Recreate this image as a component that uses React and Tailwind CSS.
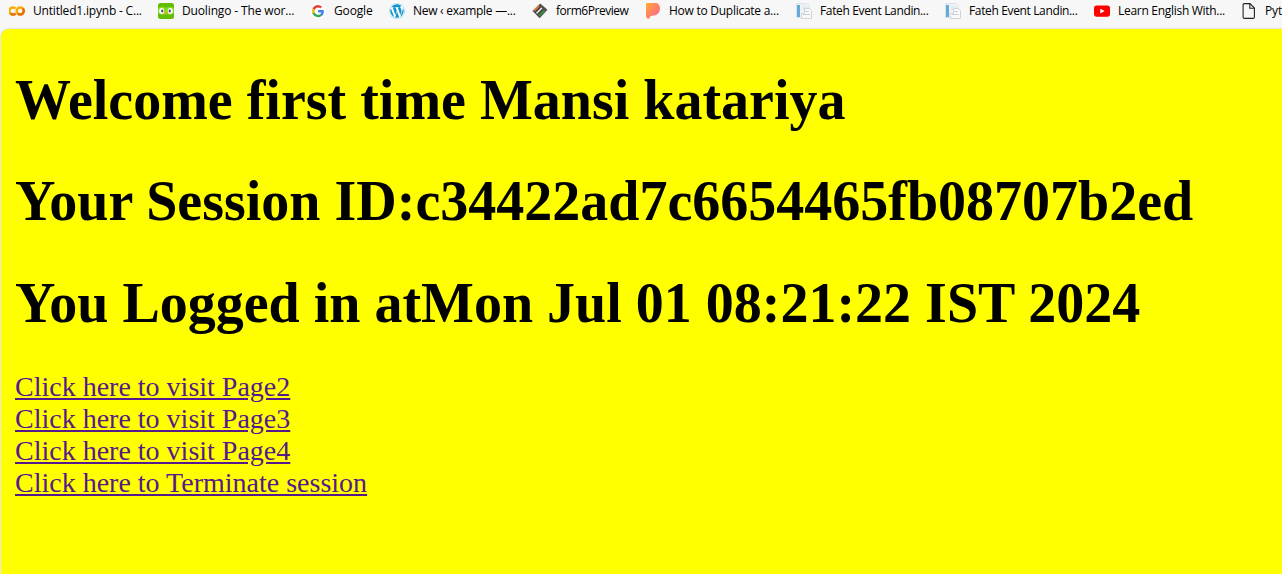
import { FaWordpress } from "react-icons/fa";

function ColabIcon() {
  return (
    <svg viewBox="0 0 16 16" className="size-4" fill="none" strokeWidth="2.5">
      <path d="M6.6 5.5A3.6 3.6 0 1 0 6.6 10.5" stroke="#f9ab00" />
      <path d="M1.6 10.5A3.6 3.6 0 0 0 6.6 10.5" stroke="#e8710a" />
      <circle cx="11.2" cy="8" r="3.5" stroke="#f9ab00" />
      <path d="M8.7 10.5A3.5 3.5 0 0 0 13.7 5.5" stroke="#e8710a" />
    </svg>
  );
}

function DuolingoIcon() {
  return (
    <svg viewBox="0 0 16 16" className="size-4">
      <rect width="16" height="16" rx="2.5" fill="#61bd05" />
      <path d="M0 5Q4 2.5 8 5Q12 2.5 16 5V10Q12 13 8 11Q4 13 0 10Z" fill="#83dc20" />
      <rect x="1.2" y="5" width="5" height="6" rx="2.5" fill="#fff" />
      <rect x="9.8" y="5" width="5" height="6" rx="2.5" fill="#fff" />
      <rect x="3.3" y="6.5" width="2" height="3" rx="1" fill="#4b4b4b" />
      <rect x="10.7" y="6.5" width="2" height="3" rx="1" fill="#4b4b4b" />
      <path d="M6.2 9.2H9.8L8 12Z" fill="#ff9f00" />
    </svg>
  );
}

function GoogleIcon() {
  return (
    <svg viewBox="0 0 16 16" className="size-4">
      <circle cx="8" cy="8" r="8" fill="#fff" />
      <g transform="translate(1.9 2) scale(.51)">
        <path fill="#4285f4" d="M23.5 12.3c0-.9-.1-1.6-.2-2.3H12v4.6h6.5c-.3 1.5-1.1 2.8-2.4 3.6v3h3.9c2.3-2.1 3.5-5.2 3.5-8.9z" />
        <path fill="#34a853" d="M12 24c3.2 0 6-1.1 8-2.9l-3.9-3c-1.1.7-2.5 1.2-4.1 1.2-3.1 0-5.8-2.1-6.7-5H1.3v3.1C3.3 21.3 7.3 24 12 24z" />
        <path fill="#fbbc05" d="M5.3 14.3a7.2 7.2 0 0 1 0-4.6V6.6h-4a12 12 0 0 0 0 10.8z" />
        <path fill="#ea4335" d="M12 4.8c1.8 0 3.3.6 4.6 1.8L20 3.2A11.5 11.5 0 0 0 12 0C7.3 0 3.3 2.7 1.3 6.6l4 3.1c.9-2.9 3.6-4.9 6.7-4.9z" />
      </g>
    </svg>
  );
}

function WordPressIcon() {
  return <FaWordpress className="size-4 rounded-full bg-white text-[#1095cb]" />;
}

function FormIcon() {
  return (
    <svg viewBox="0 0 16 16" className="size-4">
      <path d="M0.5 8L8.3 .5L15.5 6.8L7.7 15.2Z" fill="#55504d" />
      <path d="M2 7.6L6.8 3" stroke="#e07a3c" strokeWidth="1.9" />
      <path d="M4.6 10.2L9.8 5" stroke="#f0f0f0" strokeWidth="1.5" />
      <path d="M7.4 12.6L12.4 7.6" stroke="#2b9b3e" strokeWidth="1.9" />
      <path d="M3.2 9.2L8.4 4M6 11.6L11.2 6.4" stroke="#454040" strokeWidth=".9" />
    </svg>
  );
}

function PIcon() {
  return (
    <svg viewBox="0 0 16 16" className="size-4">
      <defs>
        <linearGradient id="peach" x1="0" y1="0" x2="1" y2="1">
          <stop stopColor="#ffae35" />
          <stop offset=".5" stopColor="#ff8066" />
          <stop offset="1" stopColor="#ff6695" />
        </linearGradient>
      </defs>
      <path d="M1 0H11.5Q15 1 15 5.5Q15 11.5 9 12.5L5.5 13Q5 15.8 3.5 15.8Q1 15.5 1 12Z" fill="url(#peach)" />
    </svg>
  );
}

function DocumentsIcon() {
  return (
    <svg viewBox="0 0 16 16" className="size-4">
      <path d="M.5 .5H11L13 2.5V14.5H.5Z" fill="#eef2f5" stroke="#dce2e8" />
      <path d="M1 2H4V14H1Z" fill="#65aad5" />
      <path d="M6 4H11M6 6H9" stroke="#d8e2ea" />
      <path d="M8.5 5.5H13.5L15.5 7.5V15.5H5.5V10.5H8.5Z" fill="#f8f9fa" stroke="#d0d4d8" />
      <path d="M9 8.5H13M7 11.5H14" stroke="#cbd0d4" />
    </svg>
  );
}

function YouTubeIcon() {
  return (
    <svg viewBox="0 0 16 16" className="size-4">
      <rect y="2.4" width="16" height="11.4" rx="2.7" fill="#f00" />
      <path d="M6.3 5.8L10.6 8.1L6.3 10.4Z" fill="#fff" />
    </svg>
  );
}

function FileIcon() {
  return (
    <svg viewBox="0 0 16 16" className="size-4" fill="none" stroke="#222" strokeWidth="1.1">
      <path d="M3.5 .6H9L13.4 5V14Q13.4 15.4 12 15.4H3.5Q2.1 15.4 2.1 14V2Q2.1 .6 3.5 .6Z" />
      <path d="M8.8 .8V5.2H13.2" />
    </svg>
  );
}

const bookmarks = [
  { label: "Untitled1.ipynb - C...", Icon: ColabIcon, cell: "w-[149px]", tracking: "tracking-[-0.19px]" },
  { label: "Duolingo - The wor...", Icon: DuolingoIcon, cell: "w-[152px]", tracking: "tracking-[-0.14px]" },
  { label: "Google", Icon: GoogleIcon, cell: "w-[79px]", tracking: "tracking-[-0.15px]" },
  { label: "New ‹ example —...", Icon: WordPressIcon, cell: "w-[143px]", tracking: "tracking-[-0.27px]" },
  { label: "form6Preview", Icon: FormIcon, cell: "w-[113px]", tracking: "tracking-[-0.48px]" },
  { label: "How to Duplicate a...", Icon: PIcon, cell: "w-[151px]", tracking: "tracking-[-0.26px]" },
  { label: "Fateh Event Landin...", Icon: DocumentsIcon, cell: "w-[149px]", tracking: "tracking-[-0.36px]" },
  { label: "Fateh Event Landin...", Icon: DocumentsIcon, cell: "w-[149px]", tracking: "tracking-[-0.36px]" },
  { label: "Learn English With...", Icon: YouTubeIcon, cell: "w-[147px]", tracking: "tracking-[-0.29px]" },
  { label: "Pyt", Icon: FileIcon, cell: "w-[41px]", tracking: "tracking-[-0.1px]" },
];

const links = [
  "Click here to visit Page2",
  "Click here to visit Page3",
  "Click here to visit Page4",
  "Click here to Terminate session",
];

export default function App() {
  return (
    <div className="flex h-[574px] w-full flex-col overflow-hidden bg-[#f7f7f7]">
      <nav className="flex h-[29px] shrink-0 items-start overflow-hidden pt-[3px] pl-[9px] font-['Open_Sans',sans-serif] text-[12px] leading-4 text-black">
        {bookmarks.map(({ label, Icon, cell, tracking }, i) => (
          <a key={i} className={`flex shrink-0 gap-2 whitespace-nowrap ${cell}`}>
            <span className="size-4 shrink-0"><Icon /></span>
            <span className={tracking}>{label}</span>
          </a>
        ))}
      </nav>
      <main className="ml-px grow rounded-tl-lg bg-[#ffff00] pt-[39px] pl-[14px] font-['Liberation_Serif',serif] text-[28px] leading-8 text-black shadow-[0_0_2px_#bbb]">
        <div className="text-[56px] leading-[64px] font-bold whitespace-nowrap">
          <h1>Welcome first time Mansi katariya</h1>
          <h1 className="mt-[37px]">Your Session ID:c34422ad7c6654465fb08707b2ed</h1>
          <h1 className="mt-[38px]">You Logged in atMon Jul 01 08:21:22 IST 2024</h1>
        </div>
        <div className="mt-9 flex flex-col items-start text-[#551a8b]">
          {links.map((text) => (
            <a key={text} href="#" className="underline">{text}</a>
          ))}
        </div>
      </main>
    </div>
  );
}
